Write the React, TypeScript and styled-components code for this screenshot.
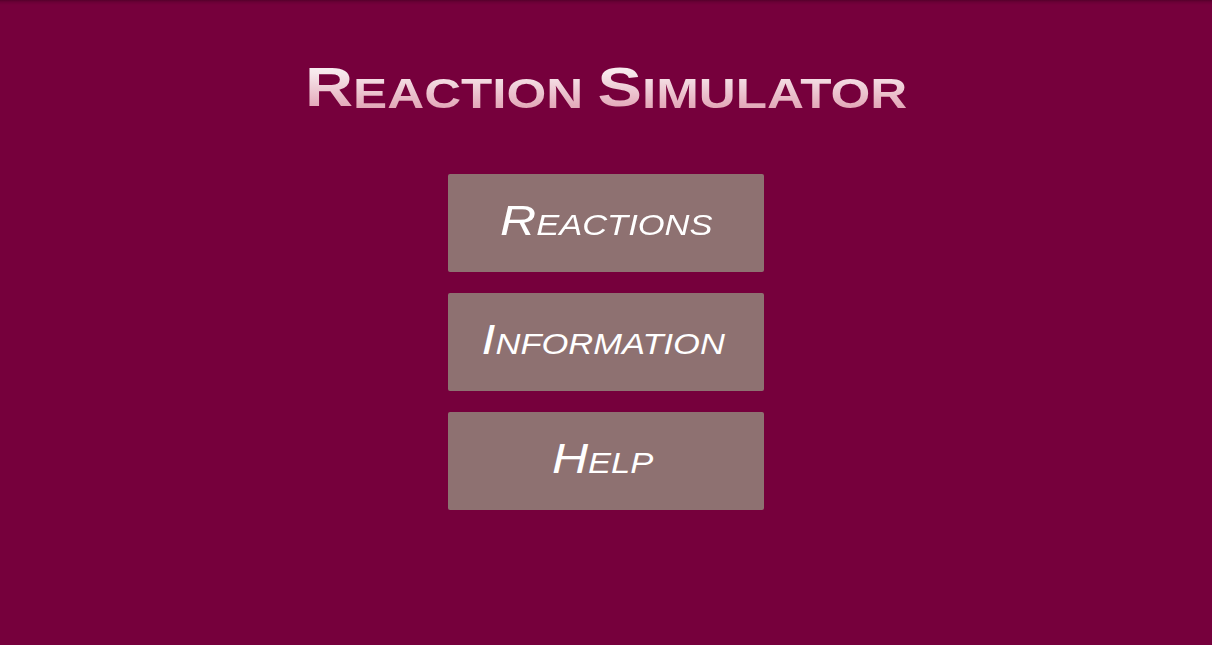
import React from "react";
import styled, { createGlobalStyle } from "styled-components";

const Global = createGlobalStyle`
  html, body { margin: 0; padding: 0; height: 100%; }
  body {
    background: #76003c;
    font-family: "Liberation Sans", Arial, sans-serif;
    overflow: hidden;
  }
  #root { height: 100%; }
`;

const Screen = styled.div`
  width: 100%;
  height: 645px;
  background: linear-gradient(180deg, #55002b 0px, #6a0036 2px, #76003c 5px, #76003c 100%);
  display: flex;
  flex-direction: column;
  align-items: center;
`;

const Title = styled.h1`
  margin: 45px 0 0;
  height: 70px;
  display: flex;
  align-items: flex-end;
  justify-content: center;
  font-family: "Liberation Sans", Arial, sans-serif;
  font-weight: 700;
  line-height: 1;
  white-space: nowrap;
  transform: scaleX(1.19);
  background: linear-gradient(180deg, #ffffff 0%, #f7e8ec 40%, #df9aad 100%);
  -webkit-background-clip: text;
  background-clip: text;
  color: transparent;
`;

const Big = styled.span`
  font-size: 56px;
`;

const Small = styled.span`
  font-size: 43px;
`;

const Menu = styled.nav`
  margin-top: 59px;
  display: flex;
  flex-direction: column;
  gap: 21.5px;
`;

const MenuButton = styled.button`
  width: 316px;
  height: 97.5px;
  border: none;
  border-radius: 2px;
  background: #8e7171;
  color: #ffffff;
  display: flex;
  align-items: center;
  justify-content: center;
  padding: 0 0 4px;
  cursor: pointer;
`;

const Label = styled.span<{ $shift?: number }>`
  display: inline-block;
  font-family: "Liberation Sans", Arial, sans-serif;
  font-style: italic;
  font-size: 42px;
  font-variant: small-caps;
  line-height: 1;
  transform: translateX(${(p) => p.$shift ?? 0}px) scaleX(1.19);
`;

const items: { label: string; shift?: number }[] = [
  { label: "Reactions" },
  { label: "Information", shift: -3 },
  { label: "Help", shift: -3 },
];

export default function App() {
  return (
    <>
      <Global />
      <Screen>
        <Title>
          <Big>R</Big>
          <Small>EACTION&nbsp;</Small>
          <Big>S</Big>
          <Small>IMULATOR</Small>
        </Title>
        <Menu>
          {items.map((it) => (
            <MenuButton key={it.label}>
              <Label $shift={it.shift}>{it.label}</Label>
            </MenuButton>
          ))}
        </Menu>
      </Screen>
    </>
  );
}
